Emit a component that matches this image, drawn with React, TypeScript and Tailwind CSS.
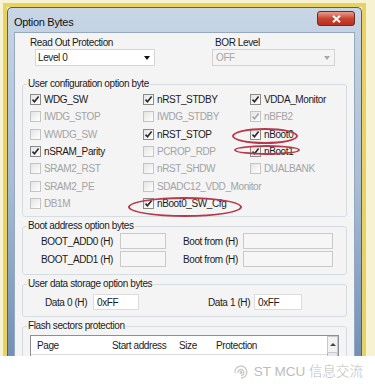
import type { ReactNode } from 'react'

type Opt = { label: string; checked?: boolean; disabled?: boolean }

const rows: Opt[][] = [
  [{ label: 'WDG_SW', checked: true }, { label: 'nRST_STDBY', checked: true }, { label: 'VDDA_Monitor', checked: true }],
  [{ label: 'IWDG_STOP', disabled: true }, { label: 'IWDG_STDBY', disabled: true }, { label: 'nBFB2', checked: true, disabled: true }],
  [{ label: 'WWDG_SW', disabled: true }, { label: 'nRST_STOP', checked: true }, { label: 'nBoot0', checked: true }],
  [{ label: 'nSRAM_Parity', checked: true }, { label: 'PCROP_RDP', disabled: true }, { label: 'nBoot1', checked: true }],
  [{ label: 'SRAM2_RST', disabled: true }, { label: 'nRST_SHDW', disabled: true }, { label: 'DUALBANK', disabled: true }],
  [{ label: 'SRAM2_PE', disabled: true }, { label: 'SDADC12_VDD_Monitor', disabled: true }, { label: '' }],
  [{ label: 'DB1M', disabled: true }, { label: 'nBoot0_SW_Cfg', checked: true }, { label: '' }],
]

function CheckBox({ label, checked, disabled }: Opt) {
  if (!label) return <div />
  return (
    <div className="flex items-center gap-[3px] whitespace-nowrap">
      <span
        className={`w-[11px] h-[11px] flex-shrink-0 border flex items-center justify-center bg-gradient-to-br from-[#e4e4e4] to-white ${
          disabled ? 'border-[#c4c4c4]' : 'border-[#8b8b8b]'
        }`}
      >
        {checked && (
          <svg width="9" height="9" viewBox="0 0 9 9">
            <path
              d="M1.5 4.6 L3.5 6.8 L7.6 1.6"
              fill="none"
              stroke={disabled ? '#a8a8a8' : '#2a2a2a'}
              strokeWidth="1.6"
            />
          </svg>
        )}
      </span>
      <span className={disabled ? 'text-[#a3a3a3]' : 'text-[#1b1b1b]'}>{label}</span>
    </div>
  )
}

function Group({ title, children, className = '' }: { title: string; children: ReactNode; className?: string }) {
  return (
    <fieldset className={`mx-[7px] border border-[#d5dde3] rounded-[3px] ${className}`}>
      <legend className="ml-[4px] px-[1px] leading-[12px] text-[#1b1b1b]">{title}</legend>
      {children}
    </fieldset>
  )
}

function Field({ value = '', white = false, className = '' }: { value?: string; white?: boolean; className?: string }) {
  return (
    <div
      className={`h-[16px] flex-shrink-0 border flex items-center pl-[3px] text-[#1b1b1b] ${
        white ? 'bg-white border-[#dcdcdc]' : 'bg-[#f6f6f6] border-[#c9c9c9]'
      } ${className}`}
    >
      {value}
    </div>
  )
}

export default function App() {
  return (
    <div className="relative w-[375px] h-[389px] bg-white overflow-hidden text-[10px] tracking-[-0.4px] font-['Liberation_Sans',Arial,sans-serif]">
      {/* photo area */}
      <div className="h-[356px] bg-[#f7f2d2] pl-[3px] pr-[9px] pt-[3px]">
        <div className="h-full border-l-[4px] border-t-[4px] border-r-[4px] border-[#e7d263]">
          <div className="h-full flex flex-col border border-b-0 border-[#4f6178] rounded-t-[5px] bg-gradient-to-b from-[#c8d6e6] via-[#a9bdd5] to-[#7290b8] px-[6px]">
            {/* title bar */}
            <div className="h-[24px] flex justify-between">
              <span className="mt-[6px] text-[11px] tracking-[-0.3px] text-[#111]">Option Bytes</span>
              <div className="mt-[3px] w-[38px] h-[15px] rounded-[3px] border border-[#6b2b22] bg-gradient-to-b from-[#e79c8c] via-[#c8452f] to-[#b8301f] flex items-center justify-center">
                <svg width="9" height="8" viewBox="0 0 9 8">
                  <path d="M1 0.8 L8 7.2 M8 0.8 L1 7.2" stroke="#fff" strokeWidth="2" />
                </svg>
              </div>
            </div>

            {/* client area */}
            <div className="flex-1 bg-[#f4f4f4] border border-b-0 border-[#95a8be] overflow-hidden">
              <div className="flex pt-[4px]">
                <div className="w-[197px] pl-[15px]">
                  <div className="leading-[12px] text-[#1b1b1b]">Read Out Protection</div>
                  <div className="ml-[5px] w-[120px] h-[17px] bg-white border border-[#d6d6d6] flex items-center justify-between pl-[2px] pr-[4px] text-[#1b1b1b]">
                    <span>Level 0</span>
                    <span className="w-0 h-0 border-l-[3px] border-r-[3px] border-t-[4px] border-l-transparent border-r-transparent border-t-[#111]" />
                  </div>
                </div>
                <div>
                  <div className="ml-[3px] leading-[12px] text-[#1b1b1b]">BOR Level</div>
                  <div className="w-[123px] h-[17px] bg-[#f4f4f4] border border-[#d2d2d2] flex items-center justify-between pl-[3px] pr-[4px] text-[#a6a6a6]">
                    <span>OFF</span>
                    <span className="w-0 h-0 border-l-[3px] border-r-[3px] border-t-[4px] border-l-transparent border-r-transparent border-t-[#a8a8a8]" />
                  </div>
                </div>
              </div>

              <Group title="User configuration option byte" className="mt-[12px] pt-[1px] pb-[4px]">
                <div className="pl-[7px]">
                  {rows.map((r, i) => (
                    <div key={i} className="grid grid-cols-[113px_107px_1fr] h-[17.3px] items-center">
                      {r.map((o, j) => (
                        <CheckBox key={j} {...o} />
                      ))}
                    </div>
                  ))}
                </div>
              </Group>

              <Group title="Boot address option bytes" className="mt-[3px] pt-[1px] pb-[7px]">
                <div className="flex flex-col gap-[2px]">
                  {['BOOT_ADD0 (H)', 'BOOT_ADD1 (H)'].map((t) => (
                    <div key={t} className="flex items-center h-[16px]">
                      <span className="w-[97px] flex-shrink-0 pl-[18px] text-[#1b1b1b] whitespace-nowrap">{t}</span>
                      <Field className="w-[46px]" />
                      <span className="w-[77px] flex-shrink-0 pl-[17px] text-[#1b1b1b] whitespace-nowrap">Boot from (H)</span>
                      <Field className="w-[90px]" />
                    </div>
                  ))}
                </div>
              </Group>

              <Group title="User data storage option bytes" className="mt-[3px] pt-[4px] pb-[6px]">
                <div className="flex items-center h-[16px]">
                  <span className="w-[70px] flex-shrink-0 pl-[22px] text-[#1b1b1b] whitespace-nowrap">Data 0 (H)</span>
                  <Field white value="0xFF" className="w-[46px]" />
                  <span className="w-[115px] flex-shrink-0 pl-[69px] text-[#1b1b1b] whitespace-nowrap">Data 1 (H)</span>
                  <Field white value="0xFF" className="w-[48px]" />
                </div>
              </Group>

              <Group title="Flash sectors protection" className="mt-[3px] pt-[3px] h-[80px]">
                <div className="ml-[7px] w-[309px] h-[40px] bg-white border border-[#8c9096] flex">
                  <div className="flex-1 h-[19px] flex items-center border-b border-[#dcdcdc] text-[#1b1b1b]">
                    <span className="w-[81px] pl-[6px]">Page</span>
                    <span className="w-[67px]">Start address</span>
                    <span className="w-[37px]">Size</span>
                    <span>Protection</span>
                  </div>
                  <div className="w-[11px] flex flex-col">
                    <div className="h-[17px] border border-[#c9c9c9] bg-[#f2f2f2] flex items-center justify-center">
                      <span className="w-0 h-0 border-l-[3px] border-r-[3px] border-b-[3px] border-l-transparent border-r-transparent border-b-[#444]" />
                    </div>
                    <div className="flex-1 border border-t-0 border-[#b9b9b9] bg-[#e8e8e8]" />
                  </div>
                </div>
              </Group>
            </div>
          </div>
        </div>
      </div>

      {/* watermark */}
      <div className="flex items-center justify-end pr-[12px] pt-[6px] gap-[4px] text-[#bcbcbc] tracking-normal">
        <svg width="18" height="16" viewBox="0 0 18 16" fill="none" stroke="#c8c8c8" strokeWidth="1.3">
          <path d="M3 9 A6 6 0 1 1 9 14" />
          <path d="M6 9 A3 3 0 1 1 9 11.5" />
          <circle cx="9" cy="8.5" r="0.8" fill="#c8c8c8" />
        </svg>
        <span className="text-[13.5px] font-['Liberation_Sans','Noto_Sans_CJK_SC',sans-serif] font-light">
          ST MCU 信息交流
        </span>
      </div>

      {/* red marker ellipses */}
      <div className="absolute left-[232px] top-[128px] w-[66px] h-[16px] rounded-[50%] border-2 border-[#b6394a]" />
      <div className="absolute left-[234px] top-[145px] w-[66px] h-[10px] rounded-[50%] border-2 border-[#b6394a]" />
      <div className="absolute left-[128px] top-[197px] w-[114px] h-[20px] rounded-[50%] border-2 border-[#b6394a]" />
    </div>
  )
}
